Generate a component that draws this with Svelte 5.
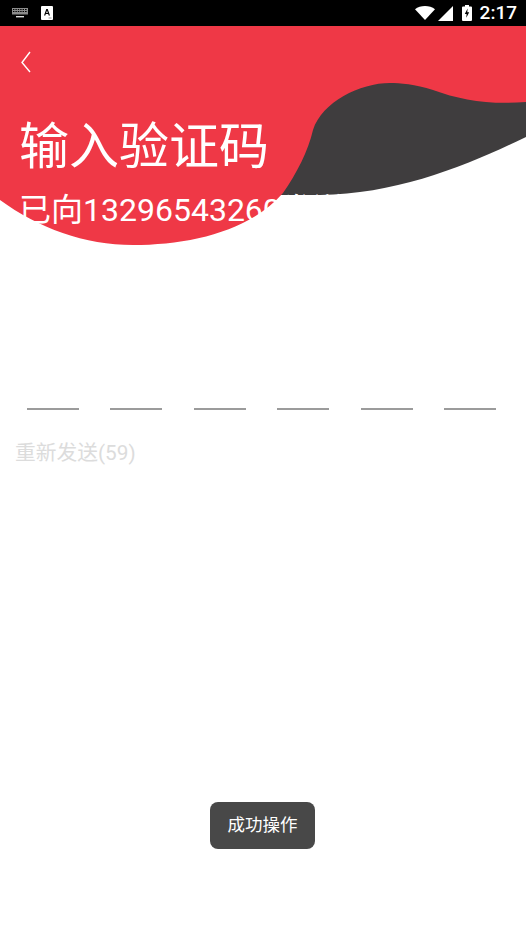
<script>
    const cells = [0, 1, 2, 3, 4, 5];
</script>

<div class="page">
    <div class="status">
        <div class="status-left">
            <svg class="kbd" viewBox="0 0 16 10" aria-hidden="true">
                <path d="M0 0h16v6.5H0z" fill="#8c8c8c" />
                <path d="M1 1h1.4v1H1zM3.4 1h1.4v1H3.4zM5.8 1h1.4v1H5.8zM8.2 1h1.4v1H8.2zM10.6 1h1.4v1h-1.4zM13 1h1.6v1H13zM1 3h1.4v1H1zM3.4 3h1.4v1H3.4zM5.8 3h1.4v1H5.8zM8.2 3h1.4v1H8.2zM10.6 3h1.4v1h-1.4zM13 3h1.6v1H13z" fill="#000" />
                <path d="M4 8h8v1.4H4z" fill="#ddd" />
            </svg>
            <div class="a-icon">
                <svg viewBox="0 0 12 14" aria-hidden="true">
                    <path d="M1 0h10a1 1 0 0 1 1 1v12a1 1 0 0 1-1 1H1a1 1 0 0 1-1-1V1a1 1 0 0 1 1-1z" fill="#fff" />
                    <path d="M3 9.5 5.3 3h1.4L9 9.5H7.7L7.2 8H4.8l-.5 1.5zM5.2 7h1.6L6 4.6z" fill="#000" />
                    <path d="M7.5 11.5h3v1h-3z" fill="#999" />
                </svg>
            </div>
        </div>
        <div class="status-right">
            <svg class="wifi" viewBox="0 0 20 14" aria-hidden="true"><path d="M0 3.2C2.8 1.1 6.200 0 10 0s7.200 1.100 10 3.200L10 14z" fill="#fff" /></svg>
            <svg class="signal" viewBox="0 0 15 15" aria-hidden="true"><path d="M15 0v15H0z" fill="#fff" /></svg>
            <svg class="battery" viewBox="0 0 10 16" aria-hidden="true">
                <path d="M3 0h4v1.500h2a1 1 0 0 1 1 1V15a1 1 0 0 1-1 1H1a1 1 0 0 1-1-1V2.500a1 1 0 0 1 1-1h2z" fill="#fff" />
                <path d="M5.600 3.500 2.800 9h1.800l-.3 3.800L7.200 7.200H5.300z" fill="#000" />
            </svg>
            <span class="time">2:17</span>
        </div>
    </div>

    <header>
        <svg class="wave" viewBox="0 0 526 230" preserveAspectRatio="none" aria-hidden="true">
            <rect width="526" height="230" fill="#fff" />
            <path d="M260 40H526V111C470 138 400 168 320 169L270 169Z" fill="#3f3d3e" />
            <path d="M0 0H526V76C490 79 460 74 433 64C415 58 400 57 390 57C360 57 322 76 313 104C308 125 297 147 283 167C250 205 190 219 133 219C85 219 38 202 0 174Z" fill="#ef3846" />
        </svg>
        <button class="back" type="button" aria-label="返回">
            <svg viewBox="0 0 10 22" aria-hidden="true"><path d="M9 1 1 11.500 9 21" fill="none" stroke="#fff" stroke-width="1.400" /></svg>
        </button>
        <h1>输入验证码</h1>
        <p class="sent">已向13296543260发送验证码</p>
    </header>

    <div class="code">
        {#each cells as cell (cell)}
            <span class="line"></span>
        {/each}
    </div>

    <div class="resend">重新发送(59)</div>

    <div class="toast">成功操作</div>
</div>

<style>
    :global(body) {
        background: #fff;
    }

    .page {
        position: relative;
        height: 936px;
        overflow: hidden;
        font-family: Roboto, "Noto Sans CJK SC", sans-serif;
    }

    .status {
        height: 26px;
        background: #000;
        display: flex;
        align-items: center;
        justify-content: space-between;
        padding: 0 9px 0 12px;
    }

    .status-left {
        display: flex;
        align-items: center;
        gap: 13px;
    }

    .kbd {
        width: 16px;
        height: 10px;
        display: block;
    }

    .a-icon svg {
        width: 12px;
        height: 14px;
        display: block;
    }

    .status-right {
        display: flex;
        align-items: center;
    }

    .wifi {
        width: 20px;
        height: 14px;
        margin-right: 3px;
    }

    .signal {
        width: 15px;
        height: 15px;
        margin-right: 9px;
    }

    .battery {
        width: 10px;
        height: 16px;
        margin-right: 8px;
    }

    .time {
        color: #fff;
        font-size: 19px;
        font-weight: 500;
        line-height: 26px;
    }

    header {
        position: relative;
        height: 230px;
        padding: 25px 19px 0;
        box-sizing: border-box;
    }

    .wave {
        position: absolute;
        left: 0;
        top: 0;
        width: 100%;
        height: 100%;
    }

    .back {
        position: relative;
        display: block;
        padding: 0;
        margin: 0 0 0 2px;
        width: 10px;
        height: 22px;
        border: 0;
        background: none;
    }

    .back svg {
        width: 10px;
        height: 22px;
        display: block;
    }

    h1 {
        position: relative;
        margin: 45px 0 0;
        font-size: 50px;
        font-weight: 400;
        line-height: 58px;
        color: #fff;
        white-space: nowrap;
    }

    .sent {
        position: relative;
        margin: 14px 0 0;
        font-size: 32px;
        line-height: 40px;
        color: #fff;
        white-space: nowrap;
    }

    .code {
        display: flex;
        justify-content: space-between;
        padding: 152px 30px 0 27px;
    }

    .line {
        width: 52px;
        height: 2px;
        background: #9b9b9b;
    }

    .resend {
        margin: 29px 0 0 15px;
        font-size: 20.750px;
        line-height: 28px;
        color: #dcdcdc;
    }

    .toast {
        position: absolute;
        left: 210px;
        top: 802px;
        width: 105px;
        height: 47px;
        padding-bottom: 4px;
        box-sizing: border-box;
        border-radius: 8px;
        background: #484848;
        color: #fff;
        font-size: 17.500px;
        display: flex;
        align-items: center;
        justify-content: center;
    }
</style>
